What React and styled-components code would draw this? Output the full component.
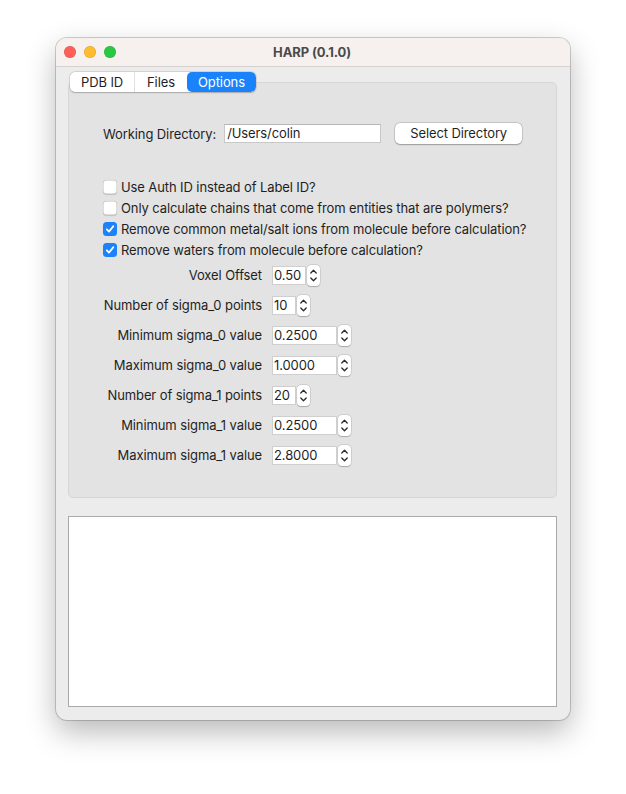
import React from "react";
import styled, { createGlobalStyle } from "styled-components";

const Global = createGlobalStyle`
  html, body { margin: 0; padding: 0; background: #ffffff; }
  body { font-family: Inter, "Liberation Sans", Arial, sans-serif; color: #1f1f1f; letter-spacing: -0.1px; }
  * { box-sizing: border-box; }
`;

const Page = styled.div`
  padding: 38px 0 0 56px;
  width: 626px;
  height: 794px;
`;

const Window = styled.div`
  width: 514px;
  height: 682px;
  border-radius: 11px;
  background: #ececec;
  box-shadow: 0 0 0 1px rgba(0,0,0,0.18), 0 12px 30px rgba(0,0,0,0.28);
  overflow: hidden;
  display: flex;
  flex-direction: column;
`;

const TitleBar = styled.div`
  height: 29px;
  flex: none;
  background: #f6f1ee;
  border-bottom: 1px solid #d4d1cf;
  display: flex;
  align-items: center;
  padding-left: 8px;
`;

const Lights = styled.div`
  display: flex;
  gap: 8px;
`;

const Light = styled.span`
  width: 12px;
  height: 12px;
  border-radius: 50%;
  background: ${p => p.$c};
  box-shadow: inset 0 0 0 0.5px rgba(0,0,0,0.15);
`;

const Title = styled.div`
  flex: 1;
  text-align: center;
  font-weight: 700;
  font-size: 13px;
  color: #4a4a4a;
  margin-right: 62px;
`;

const Body = styled.div`
  flex: 1;
  display: flex;
  flex-direction: column;
  padding: 5px 13px 13px 12px;
`;

const TabWidget = styled.div`
  display: flex;
  flex-direction: column;
`;

const TabBar = styled.div`
  display: flex;
  margin: 0 0 -10px 2px;
  position: relative;
  z-index: 1;
`;

const TabGroup = styled.div`
  display: flex;
  background: #ffffff;
  border-radius: 5px;
  box-shadow: 0 0 0 0.5px rgba(0,0,0,0.15), 0 0.5px 1.5px rgba(0,0,0,0.2);
  overflow: hidden;
  height: 20px;
`;

const Tab = styled.div`
  font-size: 13px;
  line-height: 20px;
  width: ${p => p.$w}px;
  text-align: center;
  color: ${p => (p.$active ? "#ffffff" : "#1f1f1f")};
  background: ${p => (p.$active ? "#1a82fb" : "transparent")};
  border-left: ${p => (p.$first || p.$active ? "none" : "1px solid #e0e0e0")};
  border-radius: ${p => (p.$active ? "5px" : "0")};
`;

const Pane = styled.div`
  height: 416px;
  background: #e3e3e3;
  border: 1px solid #d6d6d6;
  border-radius: 5px;
  padding: 40px 0 0 34px;
  display: flex;
  flex-direction: column;
`;

const DirRow = styled.div`
  display: flex;
  align-items: center;
  height: 21px;
`;

const Label = styled.span`
  font-size: 13px;
  color: #1f1f1f;
  white-space: nowrap;
`;

const TextField = styled.div`
  margin-left: 8px;
  width: 157px;
  height: 19px;
  background: #ffffff;
  border: 1px solid #c8c8c8;
  border-top-color: #b8b8b8;
  font-size: 13px;
  line-height: 17px;
  padding-left: 2px;
`;

const Button = styled.div`
  margin-left: 14px;
  width: 127px;
  height: 21px;
  background: #ffffff;
  border-radius: 5px;
  box-shadow: 0 0 0 0.5px rgba(0,0,0,0.18), 0 0.5px 1.5px rgba(0,0,0,0.25);
  font-size: 13px;
  line-height: 21px;
  text-align: center;
`;

const Checks = styled.div`
  margin-top: 35px;
  display: flex;
  flex-direction: column;
  gap: 5px;
`;

const CheckRow = styled.div`
  display: flex;
  align-items: center;
  height: 16px;
  gap: 4px;
`;

const Box = styled.span`
  width: 14px;
  height: 14px;
  border-radius: 3.5px;
  flex: none;
  background: ${p => (p.$on ? "#1a82fb" : "#ffffff")};
  box-shadow: ${p => (p.$on ? "none" : "inset 0 0 0 0.5px rgba(0,0,0,0.25), 0 0.5px 1px rgba(0,0,0,0.15)")};
  display: flex;
  align-items: center;
  justify-content: center;
`;

const Form = styled.div`
  margin-top: 7px;
  display: grid;
  grid-template-columns: 159px auto;
  column-gap: 10px;
  row-gap: 10px;
  align-items: center;
  justify-content: start;
`;

const FormLabel = styled.span`
  font-size: 13px;
  text-align: right;
  white-space: nowrap;
`;

const Spin = styled.div`
  display: flex;
  align-items: center;
  gap: 1px;
  height: 20px;
`;

const SpinField = styled.div`
  width: ${p => p.$w}px;
  height: 19px;
  background: #ffffff;
  border: 1px solid #cfcfcf;
  font-size: 13px;
  line-height: 17px;
  padding-left: 1px;
`;

const Stepper = styled.div`
  width: 13px;
  height: 21px;
  background: #ffffff;
  border-radius: 4px;
  box-shadow: 0 0 0 0.5px rgba(0,0,0,0.15), 0 0.5px 1px rgba(0,0,0,0.2);
  display: flex;
  align-items: center;
  justify-content: center;
`;

const Output = styled.div`
  margin-top: 18px;
  flex: 1;
  background: #ffffff;
  border: 1px solid #a9a9a9;
`;

const Check = () => (
  <svg width="10" height="10" viewBox="0 0 10 10">
    <path d="M1.8 5.3 L4 7.6 L8.3 2.2" fill="none" stroke="#fff" strokeWidth="1.8" strokeLinecap="round" strokeLinejoin="round" />
  </svg>
);

const Arrows = () => (
  <svg width="9" height="17" viewBox="0 0 9 17">
    <path d="M1.8 6 L4.5 3.2 L7.2 6" fill="none" stroke="#2a2a2a" strokeWidth="1.3" strokeLinecap="round" strokeLinejoin="round" />
    <path d="M1.8 11 L4.5 13.8 L7.2 11" fill="none" stroke="#2a2a2a" strokeWidth="1.3" strokeLinecap="round" strokeLinejoin="round" />
  </svg>
);

const checks = [
  ["Use Auth ID instead of Label ID?", false],
  ["Only calculate chains that come from entities that are polymers?", false],
  ["Remove common metal/salt ions from molecule before calculation?", true],
  ["Remove waters from molecule before calculation?", true],
];

const fields = [
  ["Voxel Offset", "0.50", 34],
  ["Number of sigma_0 points", "10", 24],
  ["Minimum sigma_0 value", "0.2500", 65],
  ["Maximum sigma_0 value", "1.0000", 65],
  ["Number of sigma_1 points", "20", 24],
  ["Minimum sigma_1 value", "0.2500", 65],
  ["Maximum sigma_1 value", "2.8000", 65],
];

export default function App() {
  return (
    <Page>
      <Global />
      <Window>
        <TitleBar>
          <Lights>
            <Light $c="#fe5f57" />
            <Light $c="#febc2e" />
            <Light $c="#28c840" />
          </Lights>
          <Title>HARP (0.1.0)</Title>
        </TitleBar>
        <Body>
          <TabWidget>
            <TabBar>
              <TabGroup>
                <Tab $first $w={64}>PDB ID</Tab>
                <Tab $w={53}>Files</Tab>
                <Tab $active $w={69}>Options</Tab>
              </TabGroup>
            </TabBar>
            <Pane>
              <DirRow>
                <Label>Working Directory:</Label>
                <TextField>/Users/colin</TextField>
                <Button>Select Directory</Button>
              </DirRow>
              <Checks>
                {checks.map(([t, on]) => (
                  <CheckRow key={t}>
                    <Box $on={on}>{on && <Check />}</Box>
                    <Label>{t}</Label>
                  </CheckRow>
                ))}
              </Checks>
              <Form>
                {fields.map(([l, v, w]) => (
                  <React.Fragment key={l}>
                    <FormLabel>{l}</FormLabel>
                    <Spin>
                      <SpinField $w={w}>{v}</SpinField>
                      <Stepper><Arrows /></Stepper>
                    </Spin>
                  </React.Fragment>
                ))}
              </Form>
            </Pane>
          </TabWidget>
          <Output />
        </Body>
      </Window>
    </Page>
  );
}
